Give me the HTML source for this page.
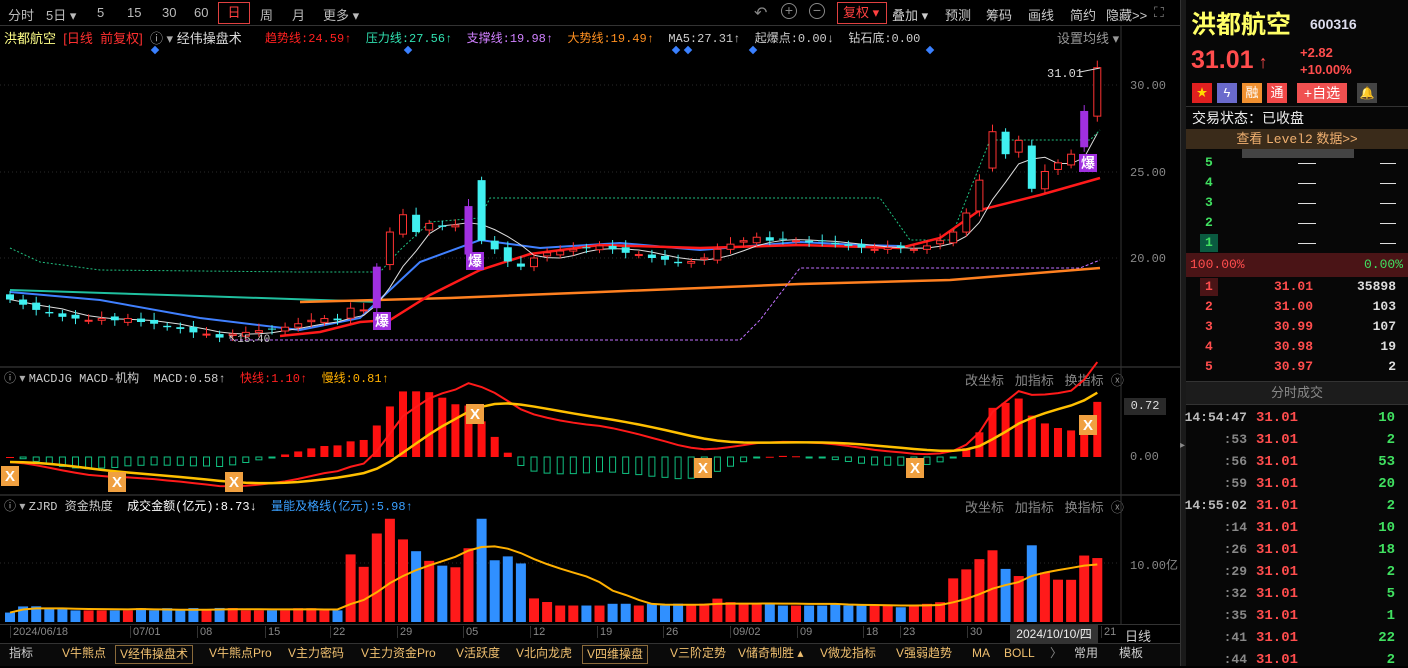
<!DOCTYPE html><html><head><meta charset="utf-8"><style>
*{margin:0;padding:0;box-sizing:border-box}
body{width:1408px;height:666px;background:#000;overflow:hidden;position:relative;font-family:"Liberation Sans","Noto Sans CJK SC",sans-serif;font-size:12px;color:#ccc}
.a{position:absolute;white-space:nowrap}
.m{font-family:"Liberation Mono","Noto Sans CJK SC",monospace}
</style></head><body>
<div class="a" style="left:0;top:0;width:1180px;height:26px;border-bottom:1px solid #333"></div>
<div class="a" style="top:5px;left:8px;font-size:13px;color:#bbb">分时</div>
<div class="a" style="top:5px;left:46px;font-size:13px;color:#bbb">5日 ▾</div>
<div class="a" style="top:5px;left:97px;font-size:13px;color:#bbb">5</div>
<div class="a" style="top:5px;left:127px;font-size:13px;color:#bbb">15</div>
<div class="a" style="top:5px;left:162px;font-size:13px;color:#bbb">30</div>
<div class="a" style="top:5px;left:194px;font-size:13px;color:#bbb">60</div>
<div class="a" style="top:2px;left:218px;width:32px;height:22px;border:1px solid #e04040;color:#ff4040;font-size:13px;text-align:center;line-height:20px">日</div>
<div class="a" style="top:5px;left:260px;font-size:13px;color:#bbb">周</div>
<div class="a" style="top:5px;left:292px;font-size:13px;color:#bbb">月</div>
<div class="a" style="top:5px;left:323px;font-size:13px;color:#bbb">更多 ▾</div>
<div class="a" style="top:3px;left:754px;font-size:16px;color:#888">↶</div>
<div class="a" style="top:3px;left:781px;width:16px;height:16px;border:1.5px solid #888;border-radius:50%;color:#888;font-size:14px;line-height:12px;text-align:center">+</div>
<div class="a" style="top:3px;left:809px;width:16px;height:16px;border:1.5px solid #888;border-radius:50%;color:#888;font-size:14px;line-height:12px;text-align:center">−</div>
<div class="a" style="top:2px;left:837px;width:50px;height:22px;border:1px solid #e04040;color:#ff4040;font-size:13px;line-height:20px;padding-left:5px">复权 ▾</div>
<div class="a" style="top:5px;left:892px;font-size:13px;color:#ccc">叠加 ▾</div>
<div class="a" style="top:5px;left:945px;font-size:13px;color:#ccc">预测</div>
<div class="a" style="top:5px;left:986px;font-size:13px;color:#ccc">筹码</div>
<div class="a" style="top:5px;left:1028px;font-size:13px;color:#ccc">画线</div>
<div class="a" style="top:5px;left:1070px;font-size:13px;color:#ccc">简约</div>
<div class="a" style="top:5px;left:1106px;font-size:13px;color:#ccc">隐藏&gt;&gt;</div>
<div class="a" style="top:4px;left:1154px;font-size:14px;color:#888">⛶</div>
<div class="a" style="top:28px;left:4px;font-size:13px"><span style="color:#ffff88">洪都航空</span> <span style="color:#ff3030">&nbsp;[日线&nbsp; 前复权]</span> <span style="color:#aaa">&nbsp;ⓘ ▾</span> <span style="color:#ddd">经伟操盘术</span></div>
<div class="a m" style="top:29px;left:265px;font-size:12px"><span style="color:#ff2020">趋势线:24.59↑</span>&nbsp; <span style="color:#30e0b0">压力线:27.56↑</span>&nbsp; <span style="color:#d080ff">支撑线:19.98↑</span>&nbsp; <span style="color:#ff9020">大势线:19.49↑</span>&nbsp; <span style="color:#ccc">MA5:27.31↑&nbsp; 起爆点:0.00↓&nbsp; 钻石底:0.00</span></div>
<div class="a" style="top:28px;left:1057px;font-size:13px;color:#999">设置均线 ▾</div>
<div class="a m" style="top:79px;left:1130px;color:#888">30.00</div>
<div class="a m" style="top:166px;left:1130px;color:#888">25.00</div>
<div class="a m" style="top:252px;left:1130px;color:#888">20.00</div>
<div class="a m" style="top:67px;left:1047px;color:#ddd">31.01</div>
<div class="a" style="top:369px;left:4px;font-size:12px"><span style="color:#aaa">ⓘ ▾</span> <span class="m" style="color:#ccc">MACDJG MACD-机构&nbsp; MACD:0.58↑&nbsp; </span><span class="m" style="color:#ff2020">快线:1.10↑&nbsp; </span><span class="m" style="color:#ffb000">慢线:0.81↑</span></div>
<div class="a" style="top:370px;left:965px;font-size:13px;color:#888">改坐标&nbsp;&nbsp; 加指标&nbsp;&nbsp; 换指标 &nbsp;ⓧ</div>
<div class="a m" style="top:398px;left:1124px;width:42px;height:17px;background:#2a2a2a;color:#ddd;text-align:center;line-height:17px">0.72</div>
<div class="a m" style="top:450px;left:1130px;color:#888">0.00</div>
<div class="a" style="top:497px;left:4px;font-size:12px"><span style="color:#aaa">ⓘ ▾</span> <span class="m" style="color:#ccc">ZJRD 资金热度&nbsp; </span><span class="m" style="color:#fff">成交金额(亿元):8.73↓&nbsp; </span><span class="m" style="color:#3aa0ff">量能及格线(亿元):5.98↑</span></div>
<div class="a" style="top:497px;left:965px;font-size:13px;color:#888">改坐标&nbsp;&nbsp; 加指标&nbsp;&nbsp; 换指标 &nbsp;ⓧ</div>
<div class="a m" style="top:556px;left:1130px;color:#888">10.00亿</div>
<svg id="c" class="a" style="left:0;top:0" width="1180" height="666"></svg>
<div class="a" style="left:0;top:624px;width:1180px;height:19px;border-top:1px solid #333"></div>
<div id="dates"></div>
<div class="a" style="top:625px;left:1010px;width:88px;height:18px;background:#333;color:#eee;font-size:12px;line-height:18px;text-align:center">2024/10/10/四</div>
<div class="a" style="top:626px;left:1125px;font-size:13px;color:#ccc">日线</div>
<div class="a" style="left:0;top:643px;width:1180px;height:23px;background:#0a0a0a;border-top:1px solid #333"></div>
<div id="tabs"></div>
<div class="a" style="left:1180px;top:0;width:6px;height:666px;background:#1a1a1a;border-left:1px solid #333"></div>
<div class="a" style="left:1180px;top:440px;width:6px;height:30px;color:#888;font-size:10px">▸</div>
<div class="a" style="left:1186px;top:0;width:222px;height:666px;background:#070707"></div>
<div class="a" style="left:1191px;top:5px;font-size:25px;font-weight:bold;color:#ffff66">洪都航空</div>
<div class="a" style="left:1310px;top:16px;font-size:14px;font-weight:bold;color:#dde">600316</div>
<div class="a" style="left:1191px;top:46px;font-size:25px;font-weight:bold;color:#ff4d4d">31.01<span style="font-size:18px"> ↑</span></div>
<div class="a" style="left:1300px;top:45px;font-size:13px;font-weight:bold;color:#ff4d4d">+2.82</div>
<div class="a" style="left:1300px;top:62px;font-size:13px;font-weight:bold;color:#ff4d4d">+10.00%</div>
<div class="a" style="left:1192px;top:83px;width:20px;height:20px;background:#e02020;color:#ffdd00;font-size:11px;text-align:center;line-height:20px">★</div>
<div class="a" style="left:1217px;top:83px;width:20px;height:20px;background:#6a6acc;color:#fff;font-size:13px;text-align:center;line-height:20px">ϟ</div>
<div class="a" style="left:1242px;top:83px;width:20px;height:20px;background:#f09030;color:#fff;font-size:13px;text-align:center;line-height:20px">融</div>
<div class="a" style="left:1267px;top:83px;width:20px;height:20px;background:#f04848;color:#fff;font-size:13px;text-align:center;line-height:20px">通</div>
<div class="a" style="left:1297px;top:83px;width:50px;height:20px;background:#f05050;color:#fff;font-size:14px;text-align:center;line-height:20px">+自选</div>
<div class="a" style="left:1357px;top:83px;width:20px;height:20px;background:#444;color:#777;font-size:12px;text-align:center;line-height:20px">🔔</div>
<div class="a" style="left:1186px;top:106px;width:222px;border-top:1px solid #333"></div>
<div class="a" style="left:1192px;top:108px;font-size:14px;color:#eee">交易状态：已收盘</div>
<div class="a" style="left:1186px;top:129px;width:222px;height:20px;background:#3a2b1a;color:#f0b070;font-size:13px;text-align:center;line-height:20px">查看 <span class="m">Level2</span> 数据&gt;&gt;</div>
<div class="a" style="left:1242px;top:149px;width:112px;height:9px;background:#444"></div>
<div id="rp"></div>
<div class="a" style="left:1186px;top:253px;width:222px;height:24px;background:#4a1416"></div>
<div class="a m" style="left:1190px;top:257px;font-size:13px;color:#ff4d4d">100.00%</div>
<div class="a m" style="left:1364px;top:257px;font-size:13px;color:#40e060">0.00%</div>
<div class="a" style="left:1186px;top:381px;width:222px;height:24px;background:#1c1c1c;border-top:1px solid #333;border-bottom:1px solid #333;color:#888;font-size:13px;text-align:center;line-height:22px">分时成交</div>
<script>
var svg=document.getElementById('c'),h='';
function L(x1,y1,x2,y2,c,w,d){h+='<line x1="'+x1+'" y1="'+y1+'" x2="'+x2+'" y2="'+y2+'" stroke="'+c+'" stroke-width="'+(w||1)+'"'+(d?' stroke-dasharray="'+d+'"':'')+'/>';}
function R(x,y,w,hh,f,s){h+='<rect x="'+x+'" y="'+y+'" width="'+w+'" height="'+Math.max(hh,1)+'" fill="'+(f||'none')+'"'+(s?' stroke="'+s+'"':'')+'/>';}
function P(pts,c,w,d){h+='<polyline points="'+pts+'" fill="none" stroke="'+c+'" stroke-width="'+(w||1)+'"'+(d?' stroke-dasharray="'+d+'"':'')+'/>';}
[85,172,258].forEach(function(y){L(0,y,1120,y,'#2a2a2a',1,'1 3')});
L(0,367,1180,367,'#444');L(0,495,1180,495,'#444');L(1121,26,1121,624,'#333');L(0,563,1120,563,'#2a2a2a',1,'1 3');
var C=[17.6,17.3,17.0,16.8,16.6,16.5,16.4,16.5,16.4,16.5,16.3,16.2,16.0,15.9,15.7,15.6,15.4,15.6,15.7,15.8,15.9,16.0,16.2,16.4,16.5,16.4,17.1,17.0,19.5,21.5,22.5,21.5,22.0,21.8,21.9,23.0,21.0,20.5,19.8,19.5,20.0,20.3,20.4,20.5,20.6,20.7,20.5,20.3,20.2,20.0,19.9,19.7,19.8,20.0,20.5,20.8,21.0,21.2,21.0,21.1,21.0,20.9,21.0,20.8,20.7,20.6,20.5,20.6,20.6,20.5,20.7,21.0,21.5,22.6,24.5,27.3,26.0,26.8,24.0,25.0,25.5,26.0,28.5,31.0];
var O=C.map(function(c,i){return i?C[i-1]+(i%3-1)*0.12:17.9});O[35]=20.2;O[36]=24.5;O[78]=26.5;O[82]=26.4;O[83]=28.2;O[28]=17.1;O[75]=25.2;
var N=C.length,dx=13.1;function X(i){return 10+i*dx}function Y(p){return 85+(30-p)*17.3}
P('10,290 200,296 380,302','#20c0a0',2);
P('10,292 100,300 200,318 300,330 360,318 420,262 480,240 540,248 620,243 700,250 800,242 860,245 900,246','#4080ff',2);
P('300,302 450,298 600,292 800,284 950,280 1050,272 1100,268','#ff8020',2.5);
P('230,340 740,340 760,320 800,268 1080,268 1100,260','#c070ff',1,'3 2');
P('10,248 40,262 100,270 300,272 380,272 400,250 430,222 480,218 490,198 880,198 910,240 950,240 990,140 1090,140 1100,130','#20c080',1,'2 2');
P('280,336 320,332 360,322 390,320 430,295 480,270 530,254 600,245 700,248 800,245 900,248 940,238 980,210 1040,195 1100,178','#ff1a1a',2.5);
var ma='';for(var i=0;i<N;i++){var s=0,k=0;for(var j=Math.max(0,i-4);j<=i;j++){s+=C[j];k++}ma+=X(i)+','+Y(s/k)+' ';}P(ma,'#ddd',1);
for(var i=0;i<N;i++){var o=O[i],c=C[i],hi=Math.max(o,c)+0.2+(i%4)*0.07,lo=Math.min(o,c)-0.2-(i%3)*0.06,x=X(i);
 var up=c>=o,col=up?'#ff3232':'#40f0f0';if(i==28||i==35||i==82)col='#a030e0';
 L(x,Y(hi),x,Y(lo),col);var t=Y(Math.max(o,c)),b=Y(Math.min(o,c));
 if(col=='#a030e0'||!up)R(x-4,t,8,b-t,col);else{R(x-3.5,t,7,Math.max(b-t,1),'#000',col)}}
[[382,312],[475,252],[1088,154]].forEach(function(p){R(p[0]-9,p[1],18,18,'#a030e0');h+='<text x="'+p[0]+'" y="'+(p[1]+14)+'" fill="#fff" font-size="14" font-weight="bold" text-anchor="middle" font-family="Noto Sans CJK SC">爆</text>'});
[155,408,676,688,753,930].forEach(function(x){h+='<rect x="'+(x-3)+'" y="47" width="6" height="6" fill="#3a80ff" transform="rotate(45 '+x+' 50)"/>'});
h+='<text x="228" y="342" fill="#ccc" font-size="11" font-family="Liberation Mono">↖15.40</text>';
P('1080,72 1100,68','#ddd',1);
function ema(a,n){var r=[],k=2/(n+1);a.forEach(function(v,i){r.push(i?r[i-1]+k*(v-r[i-1]):v)});return r}
var e12=ema(C,12),e26=ema(C,26),dif=e12.map(function(v,i){return v-e26[i]-0.1}),dea=ema(dif,9);
var z=457,sc=50,pd='',pe='';
for(var i=0;i<N;i++){var m=2*(dif[i]-dea[i]),x=X(i);if(m>=0)R(x-4,z-m*sc*0.9,8,m*sc*0.9,'#ff1010');else R(x-3,z,6,-m*sc*0.9,'none','#10c080');
 pd+=x+','+(z-dif[i]*sc)+' ';pe+=x+','+(z-dea[i]*sc)+' ';}
P(pd,'#ff1a1a',2);P(pe,'#ffc000',2.5);
[[10,476],[117,482],[234,482],[475,414],[703,468],[915,468],[1088,425]].forEach(function(p){R(p[0]-9,p[1]-10,18,20,'#f0a040');h+='<text x="'+p[0]+'" y="'+(p[1]+5)+'" fill="#fff" font-size="15" font-weight="bold" text-anchor="middle">X</text>'});
var vb=622,vs=5.9,vm='',V=[];
for(var i=0;i<N;i++){var ch=Math.abs(C[i]-(i?C[i-1]:C[0]))/C[i]*100,base=i<26?1.6:(i<40?9:(i<72?2.5:6));var v=base+ch*0.6;if(i>=28&&i<=31)v=[15,17.5,14,12][i-28];if(i==35)v=12.5;if(i==36)v=17.5;V.push(v);}
for(var i=0;i<N;i++){var x=X(i),up=C[i]>=O[i];R(x-5,vb-V[i]*vs,10,V[i]*vs,up?'#ff1a1a':'#3090ff');var s=0,k=0;for(var j=Math.max(0,i-9);j<=i;j++){s+=V[j];k++}vm+=x+','+(vb-s/k*vs)+' ';}
P(vm,'#ffb000',2);
svg.innerHTML=h;
var d=[['2024/06/18',10],['07/01',130],['08',197],['15',265],['22',330],['29',397],['05',463],['12',530],['19',597],['26',663],['09/02',730],['09',797],['18',863],['23',900],['30',967],['21',1101]],dh='';
d.forEach(function(a){dh+='<div class="a" style="top:626px;left:'+a[1]+'px;font-size:11px;color:#888;border-left:1px solid #333;padding-left:2px">'+a[0]+'</div>'});
document.getElementById('dates').innerHTML=dh;
var t=[['指标',5,0,'#ccc'],['V牛熊点',58],['V经伟操盘术',115,1],['V牛熊点Pro',205],['V主力密码',284],['V主力资金Pro',357],['V活跃度',452],['V北向龙虎',512],['V四维操盘',582,1],['V三阶定势',666],['V储奇制胜 ▴',734],['V微龙指标',816],['V强弱趋势',892],['MA',968],['BOLL',1000],['〉',1046,0,'#888'],['常用',1070,0,'#ccc'],['模板',1115,0,'#ccc']],th='';
t.forEach(function(a){th+='<div class="a" style="top:645px;left:'+a[1]+'px;height:19px;line-height:17px;padding:0 4px;font-size:12px;color:'+(a[3]||'#f0c070')+';'+(a[2]?'border:1px solid #8a6a3a;':'')+'">'+a[0]+'</div>'});
document.getElementById('tabs').innerHTML=th;
var r='';
function T(x,y,s,c,al,f){r+='<div class="a m" style="top:'+(y-8)+'px;'+(al?'right:'+(1408-x)+'px':'left:'+x+'px')+';font-size:'+(f||13)+'px;color:'+c+';font-weight:bold">'+s+'</div>'}
[5,4,3,2,1].forEach(function(n,k){var y=163+k*20;if(n==1)r+='<div class="a" style="left:1200px;top:'+(y-9)+'px;width:18px;height:18px;background:#0a5a40"></div>';T(1205,y,n,'#40e060');r+='<div class="a" style="left:1298px;top:'+y+'px;width:18px;border-top:1px solid #ddd"></div><div class="a" style="left:1380px;top:'+y+'px;width:16px;border-top:1px solid #ddd"></div>'});
var b=[['31.01','35898'],['31.00','103'],['30.99','107'],['30.98','19'],['30.97','2']];
b.forEach(function(a,k){var y=287+k*20;if(!k)r+='<div class="a" style="left:1200px;top:'+(y-9)+'px;width:18px;height:18px;background:#4a1416"></div>';T(1205,y,k+1,'#ff4d4d');T(1313,y,a[0],'#ff4d4d',1);T(1396,y,a[1],'#ddd',1)});
var tr=[['14:54:47',10],[':53',2],[':56',53],[':59',20],['14:55:02',2],[':14',10],[':26',18],[':29',2],[':32',5],[':35',1],[':41',22],[':44',2]];
tr.forEach(function(a,k){var y=418+k*22;T(1247,y,a[0],a[0].length>4?'#bbb':'#888',1,13);T(1256,y,'31.01','#ff4d4d',0,14);T(1395,y,a[1],'#40e060',1,14)});
document.getElementById('rp').innerHTML=r;
</script>
</body></html>
